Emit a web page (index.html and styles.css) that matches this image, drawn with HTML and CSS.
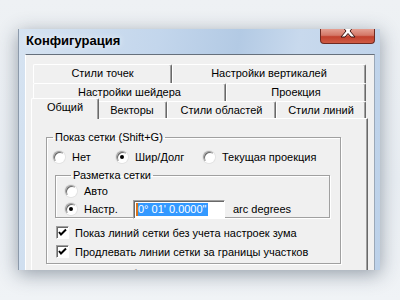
FILE: index.html
```html
<!DOCTYPE html>
<html lang="ru">
<head>
    <meta charset="UTF-8">
    <title>Конфигурация</title>
    <link rel="stylesheet" href="styles.css">
</head>
<body>
    <div class="window">
        <div class="titlebar">
            <span class="title">Конфигурация</span>
            <span class="close-btn">
                <svg width="20" height="14" viewBox="0 0 20 14">
                    <path d="M3 -4 L8 2 L3 8 L7 8 L10 4.5 L13 8 L17 8 L12 2 L17 -4 Z" fill="#fff" stroke="#3b1512" stroke-width="1"/>
                </svg>
            </span>
        </div>
        <div class="client">
            <div class="tabctl">
                <div class="tab-row row-1">
                    <div class="tab w-139">Стили точек</div>
                    <div class="tab w-194">Настройки вертикалей</div>
                </div>
                <div class="tab-row row-2">
                    <div class="tab w-193">Настройки шейдера</div>
                    <div class="tab w-140">Проекция</div>
                </div>
                <div class="tab-row row-3">
                    <div class="tab w-64 active">Общий</div>
                    <div class="tab w-70">Векторы</div>
                    <div class="tab w-109">Стили областей</div>
                    <div class="tab w-90">Стили линий</div>
                </div>
                <div class="panel">
                    <fieldset class="group outer">
                        <legend>Показ сетки (Shift+G)</legend>
                        <div class="radio-row">
                            <label class="opt opt-none"><span class="radio"></span>Нет</label>
                            <label class="opt opt-latlon"><span class="radio on"></span>Шир/Долг</label>
                            <label class="opt"><span class="radio"></span>Текущая проекция</label>
                        </div>
                        <fieldset class="group inner">
                            <legend>Разметка сетки</legend>
                            <label class="opt line"><span class="radio"></span>Авто</label>
                            <div class="custom-row">
                                <label class="opt custom"><span class="radio on"></span>Настр.</label>
                                <div class="field"><span class="caret"></span><span class="sel">0° 01' 0.0000"</span></div>
                                <span class="unit">arc degrees</span>
                            </div>
                        </fieldset>
                        <label class="opt check-line first"><span class="check"><svg width="9" height="9" viewBox="0 0 9 9"><path d="M1 4 L3 6.5 L8 1.5" fill="none" stroke="#000" stroke-width="2"/></svg></span>Показ линий сетки без учета настроек зума</label>
                        <label class="opt check-line"><span class="check"><svg width="9" height="9" viewBox="0 0 9 9"><path d="M1 4 L3 6.5 L8 1.5" fill="none" stroke="#000" stroke-width="2"/></svg></span>Продлевать линии сетки за границы участков</label>
                    </fieldset>
                    <fieldset class="group next">
                        <legend>Настройки отображения (Shift+O)</legend>
                    </fieldset>
                </div>
            </div>
        </div>
    </div>
</body>
</html>
```

FILE: styles.css
```css
html, body {
    margin: 0;
    height: 100%;
    overflow: hidden;
}
body {
    background: linear-gradient(#eef1f4, #e9eef3 60%, #f0f3f6);
    font-family: "Liberation Sans", Arial, sans-serif;
    font-size: 11px;
    color: #000;
}
.window {
    margin: 29px 0 0 18px;
    width: 362px;
    height: 241px;
    overflow: hidden;
    background: linear-gradient(100deg, #d6e3f1 0%, #c3d6ec 35%, #b3cae4 55%, #c8d9ed 70%, #bcd1e9 100%);
    box-shadow: 0 4px 18px rgba(40, 55, 75, 0.45);
    border-left: 1px solid #8c9aab;
    box-sizing: border-box;
}
.titlebar {
    height: 25px;
    display: flex;
    align-items: flex-start;
    justify-content: space-between;
}
.title {
    font-weight: bold;
    font-size: 13px;
    margin: 4px 0 0 7px;
    text-shadow: 0 0 6px rgba(255, 255, 255, 0.8);
}
.close-btn {
    width: 53px;
    height: 14px;
    margin-right: 5px;
    border: 1px solid #6e2a22;
    border-top: none;
    border-radius: 0 0 4px 4px;
    background: linear-gradient(#e4a093, #d47767 45%, #c2412e 55%, #cf5b44);
    display: flex;
    justify-content: center;
    overflow: hidden;
}
.client {
    margin: 0 5px 0 6px;
    height: 230px;
    background: #f0f0f0;
    border-top: 1px solid #66707c;
    border-left: 1px solid #ffffff;
    border-right: 1px solid #9aa8b8;
    padding: 9px 0 0 5px;
    box-sizing: border-box;
}
.tabctl {
    width: 337px;
}
.tab-row {
    display: flex;
    padding-left: 2px;
}
.row-1 { height: 19px; }
.row-2 { height: 18px; }
.row-3 { height: 17px; }
.tab {
    box-sizing: border-box;
    background: #f0f0f0;
    border-top: 1px solid #fff;
    border-left: 1px solid #fff;
    border-right: 1px solid #696969;
    box-shadow: inset -1px 0 0 #a0a0a0;
    border-radius: 2px 2px 0 0;
    text-align: center;
    line-height: 16px;
    white-space: nowrap;
}
.row-1 .tab { line-height: 17px; }
.w-139 { width: 139px; }
.w-194 { width: 194px; }
.w-193 { width: 193px; }
.w-140 { width: 140px; }
.w-64 { width: 64px; }
.w-70 { width: 70px; }
.w-109 { width: 109px; }
.w-90 { width: 90px; }
.tab.active {
    width: 68px;
    margin: -3px -2px -1px -2px;
    line-height: 17px;
    position: relative;
    z-index: 1;
}
.panel {
    height: 200px;
    border-top: 1px solid #fff;
    border-left: 1px solid #fff;
    border-right: 1px solid #696969;
    box-shadow: inset -1px 0 0 #a0a0a0;
    padding: 12px 0 0 14px;
    box-sizing: border-box;
}
.group {
    margin: 0;
    padding: 0;
    border: 1px solid #a0a0a0;
    box-shadow: 1px 1px 0 #fff, inset 1px 1px 0 #fff;
}
.group legend {
    padding: 0 2px;
    margin-left: 6px;
    line-height: 13px;
}
.outer {
    width: 295px;
    height: 133px;
    box-sizing: border-box;
}
.radio-row {
    display: flex;
    margin: 5px 0 0 6px;
    height: 16px;
    align-items: center;
}
.opt {
    display: flex;
    align-items: center;
    white-space: nowrap;
}
.opt-none { width: 63px; }
.opt-latlon { width: 87px; }
.radio {
    width: 12px;
    height: 12px;
    box-sizing: border-box;
    border-radius: 50%;
    background: #fff;
    border: 1px solid;
    border-color: #a0a0a0 #fff #fff #a0a0a0;
    box-shadow: inset 1px 1px 0 #696969, 0 0 0 1px #e3e3e3;
    margin-right: 7px;
    display: flex;
    align-items: center;
    justify-content: center;
}
.radio.on::after {
    content: "";
    width: 4px;
    height: 4px;
    border-radius: 50%;
    background: #000;
}
.inner {
    width: 275px;
    height: 49px;
    box-sizing: border-box;
    margin: 4px 0 0 8px;
    padding: 1px 0 0 9px;
}
.line { height: 16px; }
.custom-row {
    display: flex;
    align-items: center;
    height: 20px;
    margin-top: 0;
}
.custom { width: 68px; }
.field {
    width: 92px;
    height: 19px;
    box-sizing: border-box;
    background: #fff;
    border: 1px solid;
    border-color: #a0a0a0 #fff #fff #a0a0a0;
    box-shadow: inset 1px 1px 0 #696969;
    display: flex;
    align-items: center;
    padding-left: 2px;
}
.caret {
    width: 2px;
    height: 13px;
    background: #d8731c;
}
.sel {
    background: #3399ff;
    color: #fff;
    line-height: 13px;
    padding-right: 1px;
}
.unit { margin-left: 8px; }
.check-line {
    margin-left: 9px;
    height: 19px;
}
.check-line.first { margin-top: 5px; }
.check {
    width: 13px;
    height: 13px;
    box-sizing: border-box;
    background: #fff;
    border: 1px solid;
    border-color: #a0a0a0 #fff #fff #a0a0a0;
    box-shadow: inset 1px 1px 0 #696969;
    margin-right: 6px;
    display: flex;
    align-items: center;
    justify-content: center;
}
.next {
    width: 295px;
    height: 40px;
    margin-top: 4px;
}
.next legend { margin-left: 8px; }
```
